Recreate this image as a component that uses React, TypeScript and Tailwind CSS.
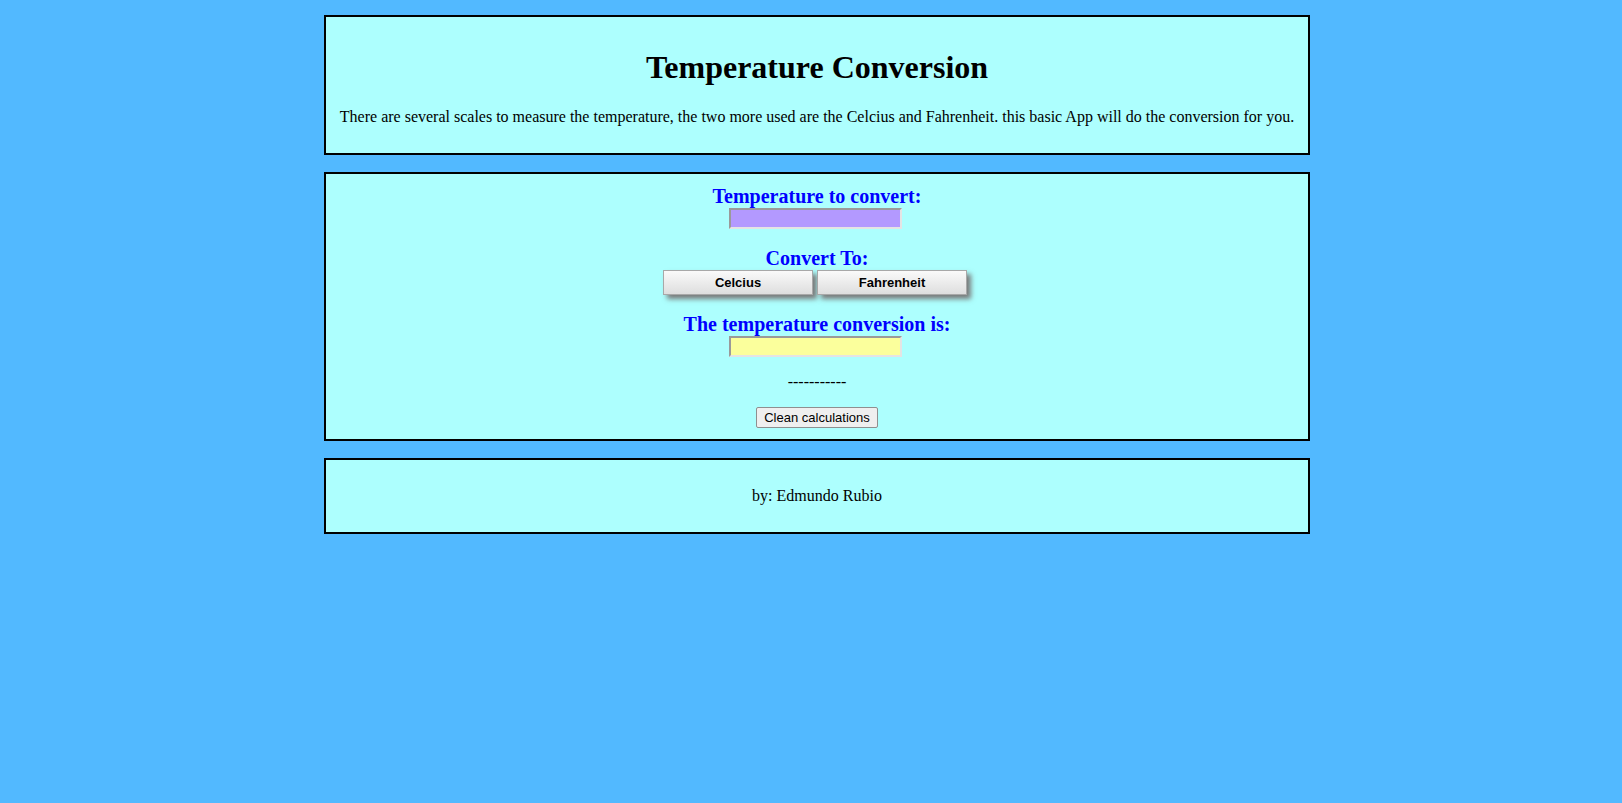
import { useState } from "react";

const box = "ml-[324px] w-[986px] border-2 border-black bg-[#adfffe] p-[11px]";
const heading = "h-[23px] text-[20px] leading-[23px] font-bold text-[#0000ff]";
const field =
  "mr-[3px] h-[21px] w-[173px] border-2 border-t-[#9a9a9a] border-l-[#9a9a9a] border-r-[#e4e4e4] border-b-[#e4e4e4] px-1 text-[13px] outline-none";
const scaleBtn =
  "h-[25px] w-[150px] border border-[#a8a8a8] bg-gradient-to-b from-[#fafafa] to-[#dedede] text-[13px] font-bold text-black shadow-[4px_4px_5px_#7a7a7a] [font-family:'Liberation_Sans',Arial,sans-serif]";

export default function App() {
  const [value, setValue] = useState("");
  const [result, setResult] = useState("");
  const [note, setNote] = useState("-----------");

  const convert = (to: "C" | "F") => {
    const n = parseFloat(value);
    if (isNaN(n)) return;
    if (to === "C") {
      setResult(((n - 32) * (5 / 9)).toFixed(2));
      setNote(n + " °F = " + ((n - 32) * (5 / 9)).toFixed(2) + " °C");
    } else {
      setResult((n * (9 / 5) + 32).toFixed(2));
      setNote(n + " °C = " + (n * (9 / 5) + 32).toFixed(2) + " °F");
    }
  };

  const clean = () => {
    setValue("");
    setResult("");
    setNote("-----------");
  };

  return (
    <div className="min-h-screen bg-[#52b9ff] pt-[15px] text-black [font-family:'Liberation_Serif','Times_New_Roman',serif]">
      <div className={box}>
        <h1 className="mt-[21px] text-center text-[32px] font-bold leading-[37px]">
          Temperature Conversion
        </h1>
        <p className="mt-[22px] mb-[16px] text-center text-[16px] leading-[18px]">
          There are several scales to measure the temperature, the two more used are the Celcius and
          Fahrenheit. this basic App will do the conversion for you.
        </p>
      </div>

      <div className={box + " mt-[17px] flex flex-col items-center"}>
        <div className={heading}>Temperature to convert:</div>
        <input
          className={field + " bg-[#b399ff]"}
          value={value}
          onChange={(e) => setValue(e.target.value)}
        />

        <div className={heading + " mt-[18px]"}>Convert To:</div>
        <div className="mr-[4px] flex gap-[4px]">
          <button className={scaleBtn} onClick={() => convert("C")}>
            Celcius
          </button>
          <button className={scaleBtn} onClick={() => convert("F")}>
            Fahrenheit
          </button>
        </div>

        <div className={heading + " mt-[18px]"}>The temperature conversion is:</div>
        <input className={field + " bg-[#fbff9c]"} value={result} readOnly />

        <div className="mt-[16px] h-[18px] text-[16px] leading-[18px]">{note}</div>

        <button
          className="mt-[16px] h-[21px] rounded-[2px] border border-[#8f8f8f] bg-[#efefef] px-[7px] text-[13px] leading-[19px] [font-family:'Liberation_Sans',Arial,sans-serif]"
          onClick={clean}
        >
          Clean calculations
        </button>
      </div>

      <div className={box + " mt-[17px]"}>
        <p className="my-[16px] text-center text-[16px] leading-[18px]">by: Edmundo Rubio</p>
      </div>
    </div>
  );
}
